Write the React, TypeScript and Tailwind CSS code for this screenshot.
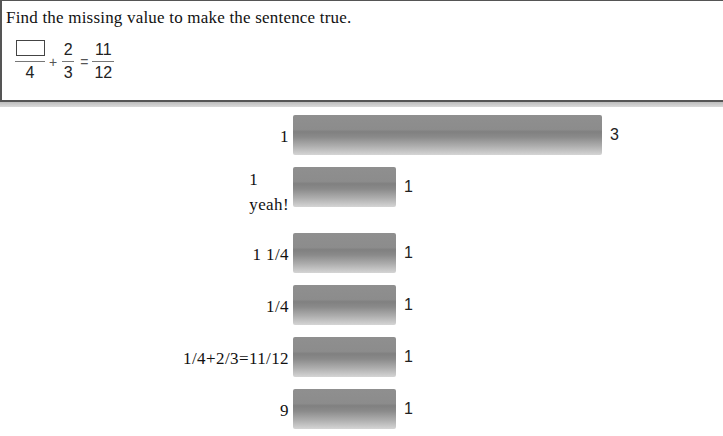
import React from 'react';

// one bar row: left label(s), gray bar sized by count, count on the right
const rows = [
  { label: ['1'], count: 3 },
  { label: ['1', 'yeah!'], count: 1 },
  { label: ['1 1/4'], count: 1 },
  { label: ['1/4'], count: 1 },
  { label: ['1/4+2/3=11/12'], count: 1 },
  { label: ['9'], count: 1 },
];

const UNIT = 103;

function Bar({ count }: { count: number }) {
  return (
    <div
      className="h-10 shrink-0 rounded-[2px] bg-[linear-gradient(to_bottom,#8f8f8f_0%,#8c8c8c_36%,#808080_42%,#8a8a8a_55%,#aeaeae_78%,#d5d5d5_100%)]"
      style={{ width: count * UNIT }}
    />
  );
}

export default function App() {
  return (
    <div className="w-[723px] h-[436px] bg-white overflow-hidden">
      {/* question box */}
      <div className="h-[102px] border-t border-l-2 border-b-2 border-[#555] pl-[4px] pt-[7px]">
        <div className="text-[17px] leading-[20px] tracking-[0.2px] text-[#111] font-['Liberation_Serif',serif]">
          Find the missing value to make the sentence true.
        </div>
        <div className="flex items-start ml-[9px] mt-[12px] font-['Liberation_Sans',Arial,sans-serif] text-[#222]">
          <div className="flex flex-col w-[30px]">
            <div className="h-[21px] flex justify-center">
              <div className="w-[29px] h-[16px] border border-[#444]" />
            </div>
            <div className="h-px bg-[#777]" />
            <div className="pt-[3px] text-center text-[16px] leading-[16px]">4</div>
          </div>
          <span className="ml-[4px] mt-[15px] text-[14px] leading-[14px] text-[#555]">+</span>
          <div className="flex flex-col w-[12px] ml-[5px]">
            <div className="h-[21px] pt-[2px] text-center text-[16px] leading-[16px]">2</div>
            <div className="h-px bg-[#777]" />
            <div className="pt-[3px] text-center text-[16px] leading-[16px]">3</div>
          </div>
          <span className="ml-[6px] mt-[15px] text-[14px] leading-[14px] text-[#555]">=</span>
          <div className="flex flex-col w-[22px] ml-[4px]">
            <div className="h-[21px] pt-[2px] text-center text-[16px] leading-[16px]">11</div>
            <div className="h-px bg-[#777]" />
            <div className="pt-[3px] text-center text-[16px] leading-[16px]">12</div>
          </div>
        </div>
      </div>
      <div className="h-[5px] bg-[linear-gradient(to_bottom,#bdbdbd,#d9d9d9)]" />

      {/* bars */}
      <div className="flex flex-col gap-3 pt-[8px]">
        {rows.map((r, i) => (
          <div key={i} className="flex items-start">
            <div className="w-[293px] shrink-0 pr-[4px] flex justify-end font-['Liberation_Serif',serif] text-[17px] tracking-[0.4px] text-[#111]">
              {r.label.length > 1 ? (
                <div className="text-left leading-[25px] pb-[4px]">
                  {r.label.map((l, j) => (
                    <div key={j}>{l}</div>
                  ))}
                </div>
              ) : (
                <div className="h-10 flex items-center pt-1 leading-5">{r.label[0]}</div>
              )}
            </div>
            <Bar count={r.count} />
            <div className="h-10 flex items-center ml-2 text-[16px] leading-5 text-[#222] font-['Liberation_Sans',Arial,sans-serif]">
              {r.count}
            </div>
          </div>
        ))}
      </div>
    </div>
  );
}
